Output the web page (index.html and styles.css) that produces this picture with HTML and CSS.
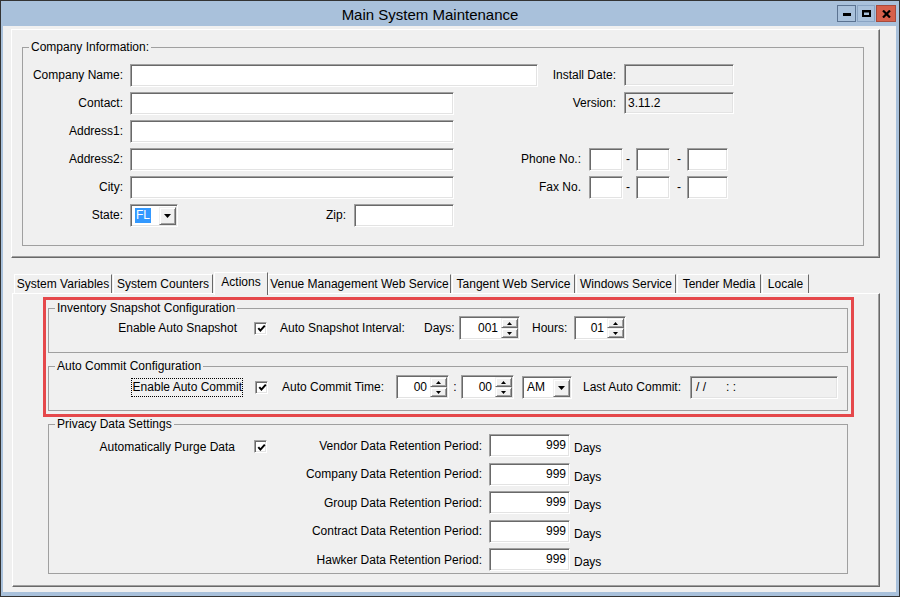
FILE: index.html
```html
<!DOCTYPE html>
<html>
<head>
<meta charset="utf-8">
<title>Main System Maintenance</title>
<link rel="stylesheet" href="styles.css">
</head>
<body>
<div class="window">
  <div class="titlebar">
    <div class="title">Main System Maintenance</div>
    <div class="caption">
      <span class="cbtn cmin"><svg width="8" height="3" viewBox="0 0 8 3"><rect width="8" height="3" fill="#000"/></svg></span>
      <span class="cbtn cmax"><svg width="9" height="7" viewBox="0 0 9 7"><path d="M0 0H9V7H0Z M2 2.5V5H7V2.5Z" fill="#000" fill-rule="evenodd"/></svg></span>
      <span class="cbtn cclose"><svg width="9" height="8" viewBox="0 0 9 8"><path d="M1 0.5L8 7.5M8 0.5L1 7.5" stroke="#000" stroke-width="2.2"/></svg></span>
    </div>
  </div>
  <div class="client">
    <div class="panel">
      <fieldset class="group company">
        <legend>Company Information:</legend>
        <div class="rows">
          <div class="crow">
            <span class="lbl l-co">Company Name:</span><span class="field w-name"></span>
            <span class="lbl l-inst">Install Date:</span><span class="field ro w-inst"></span>
          </div>
          <div class="crow">
            <span class="lbl l-co">Contact:</span><span class="field w-addr"></span>
            <span class="lbl l-ver">Version:</span><span class="field ro w-inst txt">3.11.2</span>
          </div>
          <div class="crow">
            <span class="lbl l-co">Address1:</span><span class="field w-addr"></span>
          </div>
          <div class="crow">
            <span class="lbl l-co">Address2:</span><span class="field w-addr"></span>
            <span class="lbl l-phone">Phone No.:</span><span class="field w-p1"></span><span class="dash d1">-</span><span class="field w-p1"></span><span class="dash d2">-</span><span class="field w-p3"></span>
          </div>
          <div class="crow">
            <span class="lbl l-co">City:</span><span class="field w-addr"></span>
            <span class="lbl l-phone">Fax No.</span><span class="field w-p1"></span><span class="dash d1">-</span><span class="field w-p1"></span><span class="dash d2">-</span><span class="field w-p3"></span>
          </div>
          <div class="crow">
            <span class="lbl l-co">State:</span>
            <span class="combo w-state"><span class="combo-text"><span class="sel">FL</span></span><span class="combo-btn"><svg width="7" height="4" viewBox="0 0 7 4"><path d="M0 0H7L3.5 4Z" fill="#000"/></svg></span></span>
            <span class="lbl l-zip">Zip:</span><span class="field w-zip"></span>
          </div>
        </div>
      </fieldset>
    </div>

    <div class="tabs">
      <div class="tabstrip">
        <span class="tab t1">System Variables</span>
        <span class="tab t2">System Counters</span>
        <span class="tab t3 active">Actions</span>
        <span class="tab t4">Venue Management Web Service</span>
        <span class="tab t5">Tangent Web Service</span>
        <span class="tab t6">Windows Service</span>
        <span class="tab t7">Tender Media</span>
        <span class="tab t8">Locale</span>
      </div>
      <div class="tabpage">
        <div class="highlight"></div>

        <fieldset class="group snap">
          <legend>Inventory Snapshot Configuration</legend>
          <div class="srow">
            <span class="lbl l-snap">Enable Auto Snapshot</span>
            <span class="chk"><svg width="9" height="9" viewBox="0 0 9 9"><path d="M1.3 4.2L3.4 6.6L7.8 1.6" stroke="#000" stroke-width="2" fill="none"/></svg></span>
            <span class="lbl l-int">Auto Snapshot Interval:</span>
            <span class="lbl l-days">Days:</span>
            <span class="spin w-sd"><span class="spin-val">001</span><span class="spin-btns"><span><svg width="5" height="3" viewBox="0 0 5 3"><path d="M0 3H5L2.5 0Z" fill="#000"/></svg></span><span><svg width="5" height="3" viewBox="0 0 5 3"><path d="M0 0H5L2.5 3Z" fill="#000"/></svg></span></span></span>
            <span class="lbl l-hours">Hours:</span>
            <span class="spin w-sh"><span class="spin-val">01</span><span class="spin-btns"><span><svg width="5" height="3" viewBox="0 0 5 3"><path d="M0 3H5L2.5 0Z" fill="#000"/></svg></span><span><svg width="5" height="3" viewBox="0 0 5 3"><path d="M0 0H5L2.5 3Z" fill="#000"/></svg></span></span></span>
          </div>
        </fieldset>

        <fieldset class="group commit">
          <legend>Auto Commit Configuration</legend>
          <div class="mrow">
            <span class="lbl l-enc"><span class="focus">Enable Auto Commit</span></span>
            <span class="chk"><svg width="9" height="9" viewBox="0 0 9 9"><path d="M1.3 4.2L3.4 6.6L7.8 1.6" stroke="#000" stroke-width="2" fill="none"/></svg></span>
            <span class="lbl l-time">Auto Commit Time:</span>
            <span class="spin w-ct"><span class="spin-val">00</span><span class="spin-btns"><span><svg width="5" height="3" viewBox="0 0 5 3"><path d="M0 3H5L2.5 0Z" fill="#000"/></svg></span><span><svg width="5" height="3" viewBox="0 0 5 3"><path d="M0 0H5L2.5 3Z" fill="#000"/></svg></span></span></span>
            <span class="colon">:</span>
            <span class="spin w-ct"><span class="spin-val">00</span><span class="spin-btns"><span><svg width="5" height="3" viewBox="0 0 5 3"><path d="M0 3H5L2.5 0Z" fill="#000"/></svg></span><span><svg width="5" height="3" viewBox="0 0 5 3"><path d="M0 0H5L2.5 3Z" fill="#000"/></svg></span></span></span>
            <span class="combo w-ampm"><span class="combo-text">AM</span><span class="combo-btn"><svg width="7" height="4" viewBox="0 0 7 4"><path d="M0 0H7L3.5 4Z" fill="#000"/></svg></span></span>
            <span class="lbl l-last">Last Auto Commit:</span>
            <span class="field ro w-last txt pre">/ /      : :</span>
          </div>
        </fieldset>

        <fieldset class="group privacy">
          <legend>Privacy Data Settings</legend>
          <div class="priv">
            <div class="priv-left">
              <span class="lbl l-purge">Automatically Purge Data</span>
              <span class="chk"><svg width="9" height="9" viewBox="0 0 9 9"><path d="M1.3 4.2L3.4 6.6L7.8 1.6" stroke="#000" stroke-width="2" fill="none"/></svg></span>
            </div>
            <div class="priv-right">
              <div class="prow"><span class="lbl l-ret">Vendor Data Retention Period:</span><span class="field w-ret num">999</span><span class="days">Days</span></div>
              <div class="prow"><span class="lbl l-ret">Company Data Retention Period:</span><span class="field w-ret num">999</span><span class="days">Days</span></div>
              <div class="prow"><span class="lbl l-ret">Group Data Retention Period:</span><span class="field w-ret num">999</span><span class="days">Days</span></div>
              <div class="prow"><span class="lbl l-ret">Contract Data Retention Period:</span><span class="field w-ret num">999</span><span class="days">Days</span></div>
              <div class="prow"><span class="lbl l-ret">Hawker Data Retention Period:</span><span class="field w-ret num">999</span><span class="days">Days</span></div>
            </div>
          </div>
        </fieldset>
      </div>
    </div>
  </div>
</div>
</body>
</html>
```

FILE: styles.css
```css
* { box-sizing: border-box; }
html, body { margin: 0; padding: 0; }
body {
  width: 900px;
  height: 597px;
  overflow: hidden;
  font-family: "Liberation Sans", Arial, sans-serif;
  font-size: 12px;
  color: #000;
  background: #fff;
}

.window {
  width: 900px;
  height: 597px;
  border: 1px solid #333;
  background: #a9c1db;
  display: flex;
  flex-direction: column;
}

/* ---------- title bar ---------- */
.titlebar {
  height: 25px;
  display: flex;
  align-items: flex-start;
  flex: none;
}
.title {
  flex: 1;
  padding-left: 22px;
  text-align: center;
  font-size: 15px;
  line-height: 27px;
  color: #000;
}
.caption {
  display: flex;
  gap: 1px;
  margin-top: 4px;
  margin-right: 3px;
}
.cbtn {
  height: 17px;
  display: flex;
  align-items: center;
  justify-content: center;
  border: 1px solid #5b7391;
}
.cmin { width: 19px; align-items: flex-end; padding-bottom: 5px; }
.cmax { width: 18px; border-color: #8aa4c3; }
.cclose { width: 20px; background: #d6604b; border-color: #a84a3b; }
.cclose svg { margin-top: 1px; }

/* ---------- client ---------- */
.client {
  flex: 1;
  margin: 0 3px 4px 2px;
  background: #f0f0f0;
  padding: 3px 0 0 8px;
}

.panel {
  width: 869px;
  height: 229px;
  border: 1px solid;
  border-color: #fff #696969 #696969 #fff;
  box-shadow: inset -1px -1px 0 #a0a0a0;
  padding: 10px 0 0 10px;
}

/* group boxes */
.group {
  margin: 0;
  padding: 0;
  min-width: 0;
  border: 1px solid #a0a0a0;
}
.group legend {
  padding: 0 2px;
  margin-left: 6px;
  line-height: 14px;
  font-size: 12px;
}

.company { width: 842px; height: 206px; }
.company .rows { padding-top: 7px; }

.crow {
  display: flex;
  align-items: center;
  height: 28px;
}

.lbl {
  flex: none;
  text-align: right;
  white-space: nowrap;
}

.field {
  flex: none;
  display: block;
  height: 23px;
  background: #fff;
  border: 1px solid;
  border-color: #a0a0a0 #fff #fff #a0a0a0;
  box-shadow: inset 1px 1px 0 #696969, inset -1px -1px 0 #e3e3e3;
  line-height: 21px;
  white-space: nowrap;
  overflow: hidden;
}
.field.ro { background: #f0f0f0; }
.field.txt { padding-left: 3px; }
.field.pre { white-space: pre; padding-left: 5px; }
.field.num { text-align: right; padding-right: 3px; }

.l-co { width: 100px; margin-right: 7px; }
.w-name { width: 408px; }
.w-addr { width: 324px; }
.l-inst { width: 78px; margin-right: 8px; }
.l-ver { width: 162px; margin-right: 8px; }
.w-inst { width: 110px; height: 22px; line-height: 20px; }
.l-phone { width: 127px; margin-right: 8px; }
.w-p1 { width: 34px; }
.w-p3 { width: 41px; }
.dash { flex: none; }
.d1 { width: 13px; padding-left: 3px; }
.d2 { width: 17px; padding-left: 7px; }
.l-zip { width: 168px; margin-right: 8px; }
.w-zip { width: 100px; }

/* combo */
.combo {
  flex: none;
  display: flex;
  height: 23px;
  background: #fff;
  border: 1px solid;
  border-color: #a0a0a0 #fff #fff #a0a0a0;
  box-shadow: inset 1px 1px 0 #696969, inset -1px -1px 0 #e3e3e3;
  padding: 1px;
}
.combo-text {
  flex: 1;
  padding-left: 3px;
  padding-top: 1px;
  line-height: 17px;
}
.sel {
  background: #3399ff;
  color: #fff;
  padding: 0 1px;
  display: inline-block;
  line-height: 15px;
}
.combo-btn {
  width: 17px;
  margin: 1px 0 0 0;
  background: #f0f0f0;
  border: 1px solid;
  border-color: #f0f0f0 #696969 #696969 #f0f0f0;
  box-shadow: inset 1px 1px 0 #fff, inset -1px -1px 0 #a0a0a0;
  display: flex;
  align-items: center;
  justify-content: center;
}
.w-state { width: 48px; }
.w-ampm { width: 50px; }

/* ---------- tabs ---------- */
.tabs { margin-top: 14px; margin-left: 1px; }
.tabstrip {
  display: flex;
  align-items: flex-end;
  height: 21px;
  padding-left: 2px;
  position: relative;
  z-index: 1;
}
.tab {
  flex: none;
  height: 19px;
  margin-right: 1px;
  border: 1px solid;
  border-bottom: none;
  border-color: #fff #696969 transparent #fff;
  background: #f0f0f0;
  text-align: center;
  line-height: 18px;
  white-space: nowrap;
}
.tab.active {
  height: 23px;
  margin-bottom: -2px;
  margin-right: 0;
  line-height: 19px;
}
.t1 { width: 98px; }
.t2 { width: 100px; }
.t3 { width: 54px; }
.t4 { width: 183px; }
.t5 { width: 123px; }
.t6 { width: 100px; }
.t7 { width: 84px; }
.t8 { width: 47px; }

.tabpage {
  position: relative;
  width: 868px;
  height: 294px;
  border: 1px solid;
  border-color: #fff #696969 #696969 #fff;
  box-shadow: inset -1px -1px 0 #a0a0a0;
  padding-left: 35px;
}
.highlight {
  position: absolute;
  left: 30px;
  top: 3px;
  width: 811px;
  height: 120px;
  border: 3px solid #e5484b;
  pointer-events: none;
  z-index: 2;
}

.snap { width: 800px; height: 52px; margin-top: 7px; }
.commit { width: 800px; height: 52px; margin-top: 6px; }
.privacy { width: 800px; height: 157px; margin-top: 6px; }

/* checkbox */
.chk {
  flex: none;
  width: 13px;
  height: 13px;
  background: #fff;
  border: 1px solid;
  border-color: #a0a0a0 #fff #fff #a0a0a0;
  box-shadow: inset 1px 1px 0 #696969, inset -1px -1px 0 #e3e3e3;
  display: flex;
  align-items: center;
  justify-content: center;
  padding: 1px 0 0 1px;
}

/* spin */
.spin {
  flex: none;
  display: flex;
  height: 24px;
  background: #fff;
  border: 1px solid;
  border-color: #a0a0a0 #fff #fff #a0a0a0;
  box-shadow: inset 1px 1px 0 #696969, inset -1px -1px 0 #e3e3e3;
  padding: 1px;
}
.spin-val {
  flex: 1;
  text-align: right;
  padding-right: 3px;
  line-height: 20px;
}
.spin-btns {
  width: 17px;
  display: flex;
  flex-direction: column;
}
.spin-btns span {
  flex: 1;
  background: #f0f0f0;
  border: 1px solid;
  border-color: #f0f0f0 #696969 #696969 #f0f0f0;
  box-shadow: inset 1px 1px 0 #fff, inset -1px -1px 0 #a0a0a0;
  display: flex;
  align-items: center;
  justify-content: center;
}

/* snapshot row */
.srow {
  display: flex;
  align-items: center;
  height: 24px;
  margin-top: 1px;
}
.l-snap { width: 188px; margin-right: 17px; }
.srow .chk { margin-right: 13px; }
.l-int { width: 123px; margin-right: 21px; text-align: left; }
.l-days { width: 27px; margin-right: 8px; text-align: left; }
.w-sd { width: 61px; margin-right: 12px; }
.l-hours { width: 35px; margin-right: 7px; text-align: left; }
.w-sh { width: 52px; }

/* commit row */
.mrow {
  display: flex;
  align-items: center;
  height: 24px;
  margin-top: 2px;
}
.l-enc { width: 194px; margin-right: 12px; }
.focus {
  display: inline-block;
  border: 1px dotted #000;
  padding: 1px 0 1px 1px;
  line-height: 15px;
}
.mrow .chk { margin-right: 14px; }
.l-time { width: 106px; margin-right: 8px; text-align: left; }
.w-ct { width: 53px; }
.colon { flex: none; width: 12px; text-align: center; }
.w-ampm { margin-left: 8px; margin-right: 11px; height: 23px; }
.l-last { width: 99px; margin-right: 8px; text-align: left; }
.w-last { width: 148px; }

/* privacy */
.priv {
  display: flex;
  padding-top: 3px;
}
.priv-left {
  display: flex;
  align-items: center;
  height: 23px;
  margin-top: 1px;
}
.l-purge { width: 186px; margin-right: 19px; }
.priv-right {
  display: flex;
  flex-direction: column;
  gap: 5.5px;
}
.prow {
  display: flex;
  align-items: center;
  height: 23px;
}
.l-ret { width: 215px; margin-right: 7px; }
.w-ret { width: 81px; }
.days { margin-left: 4px; padding-top: 5px; }
```
